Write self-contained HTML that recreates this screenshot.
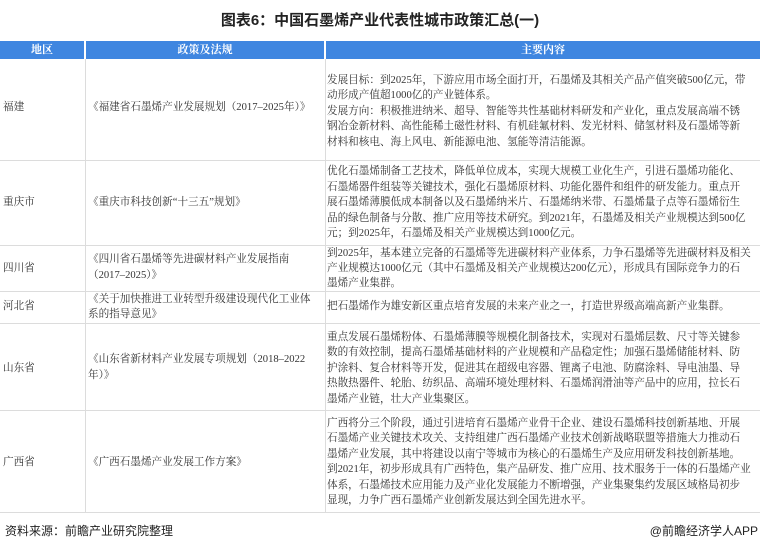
<!DOCTYPE html>
<html><head><meta charset="utf-8"><style>
*{margin:0;padding:0;box-sizing:border-box}
body{width:760px;height:552px;background:#fff;position:relative;overflow:hidden;font-family:"Liberation Serif","Noto Serif CJK SC",serif;color:#333}
.t{position:absolute;left:0;width:760px;top:9px;text-align:center;font:bold 15px "Liberation Sans","Noto Sans CJK SC",sans-serif;color:#222}
.hd{position:absolute;top:41px;height:18px;background:#3f86e0;color:#fff;font-size:11px;line-height:18px;text-align:center;font-weight:bold}
.hl{position:absolute;left:0;width:760px;height:1px;background:#dcdcdc}
.vl{position:absolute;width:1px;background:#dcdcdc;top:59px;height:453px}
.l{position:absolute;white-space:nowrap;font-size:10.6px;line-height:15.5px;color:#333}
.f{position:absolute;top:522px;font:12px "Liberation Sans","Noto Sans CJK SC",sans-serif;color:#222}
</style></head><body>
<div class="t">图表6：中国石墨烯产业代表性城市政策汇总(一)</div>
<div class="hd" style="left:0;width:84px">地区</div>
<div class="hd" style="left:86px;width:238px">政策及法规</div>
<div class="hd" style="left:326px;width:434px">主要内容</div>
<div class="vl" style="left:85px"></div><div class="vl" style="left:325px"></div>
<div class="hl" style="top:160px"></div><div class="hl" style="top:245px"></div><div class="hl" style="top:291px"></div><div class="hl" style="top:323px"></div><div class="hl" style="top:410px"></div><div class="hl" style="top:512px"></div>

<div class="l" style="left:3px;top:152px;top:152px;top:152px;top:152px;top:152px"></div>
<div class="l" style="left:3px;top:152px"></div>
<div class="l" style="left:3px;top:152px"></div>
<div class="l" style="left:3px;top:153px;display:none"></div>

<div class="l" style="left:3px;top:152px"></div>
<div class="l" style="left:3px;top:152px"></div>
<div class="l" style="left:3px;top:152px"></div>

<div class="l" style="left:3px;top:152px"></div>
<div class="l" style="left:3px;top:152px"></div>

<div class="l" style="left:3px;top:153px"></div>
<div class="l" style="left:3px;top:152px"></div>

<div class="l" style="left:3px;top:152px"></div>

<div class="l" style="left:3px;top:152px"></div>
<div class="l" style="left:3px;top:152px"></div>
<div class="l" style="left:3px;top:152px"></div>

<div class="l" style="left:3px;top:152px"></div>
<div class="l" style="left:3px;top:152px"></div>
<div class="l" style="left:3px;top:152px"></div>

<div class="l" style="left:3px;top:152px"></div>

<div class="l" style="left:3px;top:152px"></div>

<!-- Fujian -->
<div class="l" style="left:3px;top:152px"></div>
<div class="l" style="left:3px;top:153px"></div>
<div class="l" style="left:3px;top:152px"></div>

<div class="l" style="left:3px;top:100px">福建</div>
<div class="l" style="left:88px;top:100px">《福建省石墨烯产业发展规划（2017–2025年）》</div>
<div class="l" style="left:327px;top:73px">发展目标：到2025年，下游应用市场全面打开，石墨烯及其相关产品产值突破500亿元，带</div>
<div class="l" style="left:327px;top:88px">动形成产值超1000亿的产业链体系。</div>
<div class="l" style="left:327px;top:104px">发展方向：积极推进纳米、超导、智能等共性基础材料研发和产业化，重点发展高端不锈</div>
<div class="l" style="left:327px;top:119px">钢冶金新材料、高性能稀土磁性材料、有机硅氟材料、发光材料、储氢材料及石墨烯等新</div>
<div class="l" style="left:327px;top:135px">材料和核电、海上风电、新能源电池、氢能等清洁能源。</div>

<div class="l" style="left:3px;top:195px">重庆市</div>
<div class="l" style="left:88px;top:195px">《重庆市科技创新“十三五”规划》</div>
<div class="l" style="left:327px;top:164px">优化石墨烯制备工艺技术，降低单位成本，实现大规模工业化生产，引进石墨烯功能化、</div>
<div class="l" style="left:327px;top:180px">石墨烯器件组装等关键技术，强化石墨烯原材料、功能化器件和组件的研发能力。重点开</div>
<div class="l" style="left:327px;top:195px">展石墨烯薄膜低成本制备以及石墨烯纳米片、石墨烯纳米带、石墨烯量子点等石墨烯衍生</div>
<div class="l" style="left:327px;top:211px">品的绿色制备与分散、推广应用等技术研究。到2021年，石墨烯及相关产业规模达到500亿</div>
<div class="l" style="left:327px;top:226px">元；到2025年，石墨烯及相关产业规模达到1000亿元。</div>

<div class="l" style="left:3px;top:261px">四川省</div>
<div class="l" style="left:88px;top:252px">《四川省石墨烯等先进碳材料产业发展指南</div>
<div class="l" style="left:88px;top:268px">（2017–2025）》</div>
<div class="l" style="left:327px;top:246px">到2025年，基本建立完备的石墨烯等先进碳材料产业体系，力争石墨烯等先进碳材料及相关</div>
<div class="l" style="left:327px;top:261px">产业规模达1000亿元（其中石墨烯及相关产业规模达200亿元），形成具有国际竞争力的石</div>
<div class="l" style="left:327px;top:276px">墨烯产业集群。</div>

<div class="l" style="left:3px;top:299px">河北省</div>
<div class="l" style="left:88px;top:292px">《关于加快推进工业转型升级建设现代化工业体</div>
<div class="l" style="left:88px;top:307px">系的指导意见》</div>
<div class="l" style="left:327px;top:299px">把石墨烯作为雄安新区重点培育发展的未来产业之一，打造世界级高端高新产业集群。</div>

<div class="l" style="left:3px;top:361px">山东省</div>
<div class="l" style="left:88px;top:352px">《山东省新材料产业发展专项规划（2018–2022</div>
<div class="l" style="left:88px;top:368px">年）》</div>
<div class="l" style="left:327px;top:330px">重点发展石墨烯粉体、石墨烯薄膜等规模化制备技术，实现对石墨烯层数、尺寸等关键参</div>
<div class="l" style="left:327px;top:345px">数的有效控制，提高石墨烯基础材料的产业规模和产品稳定性；加强石墨烯储能材料、防</div>
<div class="l" style="left:327px;top:361px">护涂料、复合材料等开发，促进其在超级电容器、锂离子电池、防腐涂料、导电油墨、导</div>
<div class="l" style="left:327px;top:376px">热散热器件、轮胎、纺织品、高端环境处理材料、石墨烯润滑油等产品中的应用，拉长石</div>
<div class="l" style="left:327px;top:392px">墨烯产业链，壮大产业集聚区。</div>

<div class="l" style="left:3px;top:455px">广西省</div>
<div class="l" style="left:88px;top:455px">《广西石墨烯产业发展工作方案》</div>
<div class="l" style="left:327px;top:416px">广西将分三个阶段，通过引进培育石墨烯产业骨干企业、建设石墨烯科技创新基地、开展</div>
<div class="l" style="left:327px;top:431px">石墨烯产业关键技术攻关、支持组建广西石墨烯产业技术创新战略联盟等措施大力推动石</div>
<div class="l" style="left:327px;top:447px">墨烯产业发展，其中将建设以南宁等城市为核心的石墨烯生产及应用研发科技创新基地。</div>
<div class="l" style="left:327px;top:462px">到2021年，初步形成具有广西特色，集产品研发、推广应用、技术服务于一体的石墨烯产业</div>
<div class="l" style="left:327px;top:478px">体系，石墨烯技术应用能力及产业化发展能力不断增强，产业集聚集约发展区域格局初步</div>
<div class="l" style="left:327px;top:493px">显现，力争广西石墨烯产业创新发展达到全国先进水平。</div>

<div class="f" style="left:5px">资料来源：前瞻产业研究院整理</div>
<div class="f" style="right:2px">@前瞻经济学人APP</div>
</body></html>
